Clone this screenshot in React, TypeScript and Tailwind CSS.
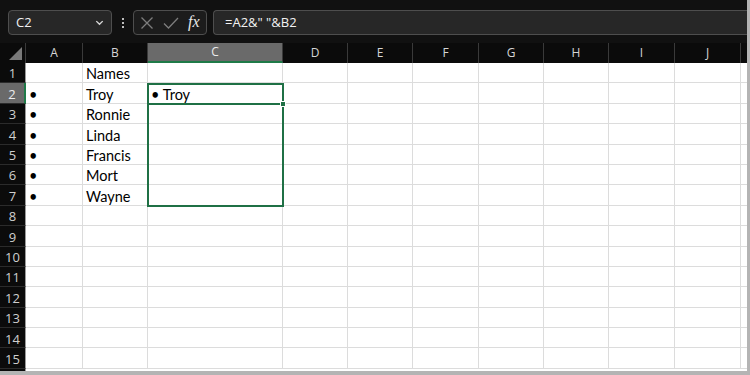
import React from "react";

const cols = [
  { k: "A", w: "w-[57px]" },
  { k: "B", w: "w-[65px]" },
  { k: "C", w: "w-[135px]" },
  { k: "D", w: "w-[65px]" },
  { k: "E", w: "w-[65px]" },
  { k: "F", w: "w-[66px]" },
  { k: "G", w: "w-[65px]" },
  { k: "H", w: "w-[65px]" },
  { k: "I", w: "w-[66px]" },
  { k: "J", w: "w-[66px]" },
  { k: "", w: "w-[20px]" },
];

const data: Record<number, string[]> = {
  1: ["", "Names", ""],
  2: ["•", "Troy", "• Troy"],
  3: ["•", "Ronnie", ""],
  4: ["•", "Linda", ""],
  5: ["•", "Francis", ""],
  6: ["•", "Mort", ""],
  7: ["•", "Wayne", ""],
};

const rows = Array.from({ length: 15 }, (_, i) => i + 1);

export default function App() {
  return (
    <div className="w-[750px] h-[375px] overflow-hidden bg-[#b4b4b4] [font-family:Lato,'Noto_Sans',sans-serif]">
      <div className="w-[747px] h-[371px] overflow-hidden bg-[#111111] flex flex-col">
        {/* formula bar */}
        <div className="h-[43px] flex items-start pt-[10px] pl-[8px] gap-[6px] shrink-0">
          <div className="w-[104px] h-[25px] rounded-[4px] bg-[#272727] border border-[#4e4e4e] flex items-center justify-between pl-[7px] pr-[6px] text-[13px] text-[#f0f0f0] [font-family:'Open_Sans',sans-serif]">
            <span>C2</span>
            <svg width="11" height="11" viewBox="0 0 12 12" fill="none" stroke="#d8d8d8" strokeWidth="1.5">
              <path d="M2.5 4.5 L6 8 L9.5 4.5" />
            </svg>
          </div>
          <div className="w-[9px] h-[25px] flex flex-col items-center justify-center gap-[2px]">
            <span className="w-[2px] h-[2px] bg-[#bdbdbd]" />
            <span className="w-[2px] h-[2px] bg-[#bdbdbd]" />
            <span className="w-[2px] h-[2px] bg-[#bdbdbd]" />
          </div>
          <div className="w-[74px] h-[25px] rounded-[4px] bg-[#1c1c1c] border border-[#4e4e4e] flex items-center pl-[6px] gap-[9px]">
            <svg width="14" height="14" viewBox="0 0 14 14" fill="none" stroke="#7d7d7d" strokeWidth="1.3">
              <path d="M1.5 1.5 L12.5 12.5 M12.5 1.5 L1.5 12.5" />
            </svg>
            <svg width="16" height="14" viewBox="0 0 16 14" fill="none" stroke="#7d7d7d" strokeWidth="1.3">
              <path d="M1 7.5 L5.5 12 L15 2" />
            </svg>
            <span className="text-[16px] text-[#e8e8e8] italic [font-family:'Liberation_Serif',serif] leading-none -mt-[2px]">
              fx
            </span>
          </div>
          <div className="flex-1 h-[25px] rounded-l-[4px] bg-[#272727] border border-r-0 border-[#4e4e4e] flex items-center pl-[11px] text-[13px] text-[#f2f2f2] [font-family:'Open_Sans',sans-serif]">
            =A2&amp;" "&amp;B2
          </div>
        </div>

        {/* column headers */}
        <div className="h-[20px] flex shrink-0 bg-[#0b0b0b] text-[12px] text-[#d6d6d6] [font-family:'Open_Sans',sans-serif]">
          <div className="w-[26px] shrink-0 flex items-end justify-end pr-[3px] pb-[3px] border-r border-[#3a3a3a]">
            <svg width="13" height="13" viewBox="0 0 13 13">
              <path d="M13 0 L13 13 L0 13 Z" fill="#7a7a7a" />
            </svg>
          </div>
          {cols.map((c) => (
            <div
              key={c.k + c.w}
              className={`${c.w} shrink-0 flex items-center justify-center border-r border-[#3a3a3a] ${
                c.k === "C" ? "bg-[#6a6a6a] border-b-2 border-b-[#1f7a48] text-[#ececec]" : ""
              }`}
            >
              {c.k}
            </div>
          ))}
        </div>

        {/* grid */}
        <div className="relative flex flex-col flex-1 bg-white">
          {rows.map((r) => (
            <div key={r} className="h-[20.4px] flex shrink-0">
              <div
                className={`w-[26px] shrink-0 flex items-center justify-center pt-[3px] text-[13px] [font-family:'Open_Sans',sans-serif] border-b border-[#2b2b2b] ${
                  r === 2
                    ? "bg-[#6a6a6a] text-[#ececec] border-r-2 border-r-[#1f7a48]"
                    : "bg-[#0b0b0b] text-[#cfcfcf] border-r border-r-[#9a9a9a]"
                }`}
              >
                {r}
              </div>
              {cols.map((c, ci) => (
                <div
                  key={c.k + c.w}
                  className={`${c.w} shrink-0 border-r border-b border-[#dcdcdc] flex items-center pl-[3px] pt-[4px] text-[14.5px] text-black leading-none`}
                >
                  {data[r]?.[ci] ?? ""}
                </div>
              ))}
            </div>
          ))}
          <div className="flex flex-1">
            <div className="w-[26px] bg-[#0b0b0b] border-r border-[#9a9a9a]" />
          </div>

          {/* selection */}
          <div className="absolute left-[147px] top-[20px] w-[137px] h-[124px] border-2 border-[#1f7045] pointer-events-none" />
          <div className="absolute left-[147px] top-[40px] w-[134px] h-[2px] bg-[#1f7045]" />
          <div className="absolute left-[280px] top-[38px] w-[6px] h-[6px] bg-[#1f7045] border border-white" />
        </div>
      </div>
    </div>
  );
}
